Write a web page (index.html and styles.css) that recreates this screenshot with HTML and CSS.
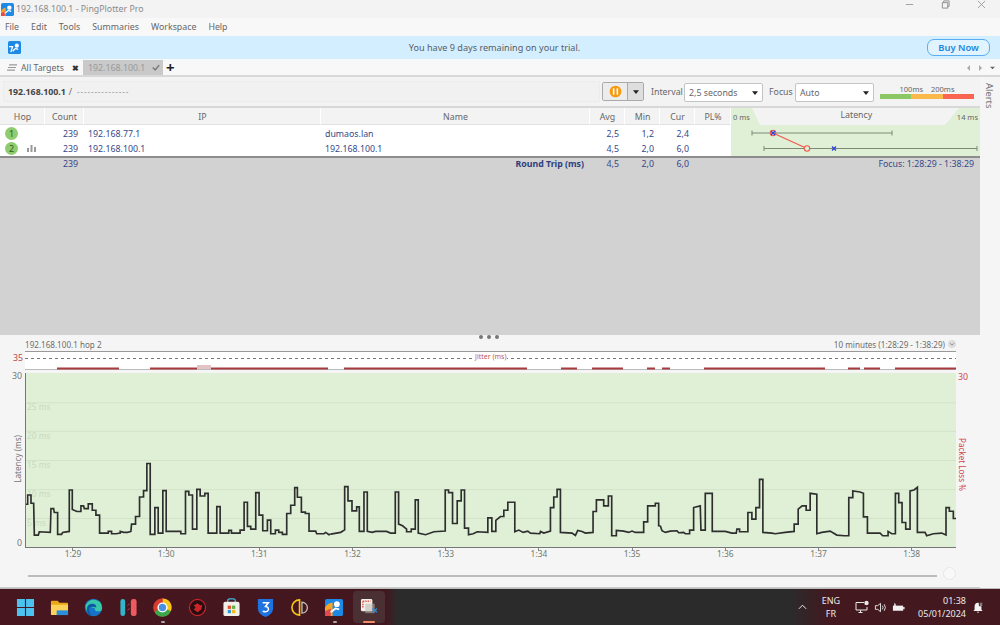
FILE: index.html
```html
<!DOCTYPE html>
<html lang="en">
<head>
<meta charset="utf-8">
<title>PingPlotter Pro</title>
<link rel="stylesheet" href="styles.css">
</head>
<body>
<div class="app">
  <header class="titlebar">
    <svg class="app-icon" viewBox="0 0 14 14"><rect width="14" height="14" rx="2" fill="#1e88e5"/><path d="M0 9 Q2 5 5 5 L5 14 L0 14Z" fill="#f4a62a"/><path d="M0 11 L4 9 L4 14 L0 14Z" fill="#e5484d"/><circle cx="9" cy="5" r="2.4" fill="#fff"/><path d="M4 11 L8 8 L11 9" stroke="#fff" stroke-width="1.4" fill="none"/></svg>
    <span class="title-text">192.168.100.1 - PingPlotter Pro</span>
    <div class="win-controls">
      <svg viewBox="0 0 10 10"><path d="M1 5H9" stroke="#999" stroke-width="1"/></svg>
      <svg viewBox="0 0 10 10"><path d="M1.5 3H7.5V9H1.5ZM3 3V1H9V7H7.5" stroke="#888" fill="none"/></svg>
      <svg viewBox="0 0 10 10"><path d="M1 1L9 9M9 1L1 9" stroke="#999" stroke-width="1"/></svg>
    </div>
  </header>
  <nav class="menubar"><span>File</span><span>Edit</span><span>Tools</span><span>Summaries</span><span>Workspace</span><span>Help</span></nav>
  <div class="banner">
    <svg class="banner-icon" viewBox="0 0 14 14"><rect width="14" height="14" rx="2" fill="#1e88e5"/><circle cx="9.5" cy="5" r="2.2" fill="#fff"/><path d="M1 6H5L3 12M5 11L8 8L11 9" stroke="#fff" stroke-width="1.4" fill="none"/></svg>
    <span class="banner-text">You have 9 days remaining on your trial.</span>
    <button class="buy">Buy Now</button>
  </div>
  <div class="tabs">
    <div class="tab tab-all">
      <svg class="tab-list" viewBox="0 0 10 7"><path d="M2 .8H10M1 3.5H9M0 6.2H8" stroke="#999" stroke-width="1.2"/></svg>
      <span>All Targets</span><b class="tab-x">✖</b>
    </div>
    <div class="tab tab-target"><span>192.168.100.1</span><svg class="tab-check" viewBox="0 0 10 8"><path d="M1 4L4 7L9 1" stroke="#777" stroke-width="1.8" fill="none"/></svg></div>
    <span class="tab-plus">+</span>
    <div class="tab-nav">
      <svg viewBox="0 0 6 8"><path d="M5 0V8L1 4Z" fill="#aaa"/></svg>
      <svg viewBox="0 0 6 8"><path d="M1 0V8L5 4Z" fill="#aaa"/></svg>
      <svg viewBox="0 0 8 6"><path d="M0 1H8L4 5Z" fill="#666"/></svg>
    </div>
  </div>
  <div class="main">
    <div class="content">
      <div class="toolbar">
        <div class="crumb"><b>192.168.100.1</b> <span>/</span> <span class="dashes">---------------</span></div>
        <div class="pause-group">
          <span class="pause-btn"><svg viewBox="0 0 14 14"><circle cx="7" cy="7" r="6.3" fill="#f79a0e"/><path d="M5 3.6V10.4M9 3.6V10.4" stroke="#fff" stroke-width="1.7"/></svg></span>
          <span class="pause-drop"><svg viewBox="0 0 8 5"><path d="M0 0H8L4 5Z" fill="#222"/></svg></span>
        </div>
        <label class="field-label label-interval">Interval</label>
        <div class="select select-interval"><span>2,5 seconds</span><svg viewBox="0 0 8 5"><path d="M0 0H8L4 5Z" fill="#222"/></svg></div>
        <label class="field-label label-focus">Focus</label>
        <div class="select select-focus"><span>Auto</span><svg viewBox="0 0 8 5"><path d="M0 0H8L4 5Z" fill="#222"/></svg></div>
        <div class="legend">
          <div class="legend-labels"><span>100ms</span><span>200ms</span></div>
          <div class="legend-bar"><i class="lg-green"></i><i class="lg-orange"></i><i class="lg-red"></i></div>
        </div>
      </div>
      <div class="table">
        <div class="th">Hop</div><div class="th">Count</div><div class="th">IP</div><div class="th">Name</div><div class="th">Avg</div><div class="th">Min</div><div class="th">Cur</div><div class="th">PL%</div>
        <div class="th-latency"><span>0 ms</span><span class="lat-title">Latency</span><span>14 ms</span></div>

        <div class="td hop"><span class="hop-dot">1</span></div><div class="td num">239</div><div class="td">192.168.77.1</div><div class="td">dumaos.lan</div><div class="td num">2,5</div><div class="td num">1,2</div><div class="td num">2,4</div><div class="td"></div>
        <div class="lat-cell">
          <svg viewBox="0 0 249 32" width="249" height="32">
            <path d="M21 8H161M21 5.5V10.5M161 5.5V10.5M33 23.5H246M33 21V26M246 21V26" stroke="#7d8a78" stroke-width="1" fill="none"/>
            <path d="M42 8L76 23.5" stroke="#f2584c" stroke-width="1.2"/>
            <circle cx="42" cy="8" r="2.7" fill="none" stroke="#f2584c" stroke-width="1.1"/>
            <circle cx="76" cy="23.5" r="2.7" fill="#dff0d8" stroke="#f2584c" stroke-width="1.1"/>
            <path d="M40 6L44 10M44 6L40 10M101 21.5L105 25.5M105 21.5L101 25.5" stroke="#2b3fe0" stroke-width="1.2"/>
          </svg>
        </div>
        <div class="td hop"><span class="hop-dot">2</span><svg class="hop-bars" viewBox="0 0 9 7"><path d="M0 3H2V7H0ZM3.5 0H5.5V7H3.5ZM7 2H9V7H7Z" fill="#999"/></svg></div><div class="td num">239</div><div class="td">192.168.100.1</div><div class="td">192.168.100.1</div><div class="td num">4,5</div><div class="td num">2,0</div><div class="td num">6,0</div><div class="td"></div>

        <div class="ts"></div><div class="ts num">239</div><div class="ts"></div><div class="ts rt">Round Trip (ms)</div><div class="ts num">4,5</div><div class="ts num">2,0</div><div class="ts num">6,0</div><div class="ts"></div><div class="ts focus">Focus: 1:28:29 - 1:38:29</div>
      </div>
      <div class="gray-pane"></div>
      <section class="graph">
        <div class="graph-head">
          <span>192.168.100.1 hop 2</span>
          <span class="grip"><i></i><i></i><i></i></span>
          <span class="range">10 minutes (1:28:29 - 1:38:29) <svg viewBox="0 0 10 10"><circle cx="5" cy="5" r="5" fill="#ddd"/><path d="M2.5 4L5 6.5L7.5 4" stroke="#777" fill="none"/></svg></span>
        </div>
        <div class="jitter-row">
          <span class="jitter-num">35</span>
          <div class="jitter">
            <span class="jitter-label">Jitter (ms)</span>
            <svg viewBox="25 0 931 18" preserveAspectRatio="none">
              <path d="M25 6.5H956" stroke="#777" stroke-width="1" stroke-dasharray="3 3"/>
              <path d="M25 17.5H956" stroke="#bbb" stroke-width="1"/>
              <rect x="197" y="13" width="14" height="4" fill="#e3c4c4"/>
              <path d="M57 16.5H119M150 16.5H197M211 16.5H328M344 16.5H527M561 16.5H577M592 16.5H623M647 16.5H655M662 16.5H670M704 16.5H825M848 16.5H860M864 16.5H880M895 16.5H956" stroke="#a83a3e" stroke-width="2"/>
            </svg>
          </div>
        </div>
        <div class="plot-row">
          <div class="y-left"><span>30</span><span class="y-title">Latency (ms)</span><span>0</span></div>
          <div class="plot">
            <svg viewBox="75 129 2793 525" preserveAspectRatio="none">
              <path d="M75 219H2868M75 305H2868M75 393H2868M75 481H2868M75 568H2868" stroke="#d2e3c8" stroke-width="3"/>
              <g class="plot-grid-labels">
                <text x="78" y="241">25 ms</text><text x="78" y="328">20 ms</text><text x="78" y="416">15 ms</text><text x="78" y="504">10 ms</text><text x="78" y="590">5 ms</text>
              </g>
              <g class="trace">
                <polyline points="75,525 80,525 80,497 90,497 90,522 98,522 100,618 112,618 115,608 148,610 150,538 158,538 160,550 170,550 170,616 182,616 185,610 205,607 205,482 214,482 214,541 228,547 240,547 240,530 248,530 250,538 262,538 262,524 274,524 274,543 285,543 285,558 296,558 296,612 322,612 322,607 332,607 332,614 345,614 358,612 358,607 368,610 380,610 390,607 392,585 404,585 404,562 416,562 416,503 428,503 428,484 438,484 438,402 448,402 448,616 462,616 462,535 472,535 472,612 486,612 486,484 496,484 496,607 540,607 540,614 554,614 554,486 564,486 564,497 575,497 575,600 588,600 588,480 598,480 598,500 612,500 612,492 622,492 622,612 648,612 648,532 658,532 658,612 684,612 684,604 692,604 692,612 718,612 718,603 730,603 730,519 740,519 740,592 750,592 750,600 765,600 765,490 775,490 775,558 786,558 786,605 800,605 800,573 810,573 810,614 824,614 824,603 834,603 834,610 845,610 845,616 858,616 858,553 870,553 870,528 882,528 882,475 890,475 890,504 902,504 902,549 914,549 914,553 925,553 925,606 945,606 948,614 970,614 975,610 985,617 990,615"/>
                <polyline transform="translate(990 0)" points="0,615 30,610 42,602 42,472 52,472 52,515 64,515 64,545 78,545 78,533 86,533 86,607 100,607 100,488 110,488 110,607 125,610 135,607 168,607 180,612 194,612 194,488 204,488 204,585 216,590 228,600 228,608 242,608 242,600 254,600 254,512 263,512 263,612 285,617 310,608 344,606 344,482 354,482 354,490 366,490 366,583 380,583 380,515 392,515 392,482 402,482 402,597 414,597 414,617 428,614 440,608 472,610 472,566 484,566 484,607 496,607 496,574 510,562 520,562 520,543 532,543 532,519 553,519 553,608 565,603 578,610 592,606 600,612 628,614 630,607 640,612 660,606 660,535 670,535 670,503 680,503 680,480 690,480 690,610 725,612 735,619 742,604 755,607 765,612 788,610 788,547 798,547 798,512 820,512 820,530 834,530 834,500 844,500 844,620 858,620 858,604 880,606 895,610 905,606 915,610 940,610 940,578 952,578 952,530 975,530 975,522 985,522 985,590 990,590"/>
                <polyline transform="translate(1980 0)" points="0,590 5,605 15,610 30,606 50,605 55,611 70,610 75,614 88,614 88,603 100,603 100,535 120,530 122,603 135,603 135,492 156,492 156,607 195,607 215,612 228,612 230,600 238,600 238,608 263,608 263,550 275,550 275,570 287,570 287,535 298,535 298,450 308,450 308,610 335,612 345,614 375,610 402,607 402,585 414,585 414,540 426,530 438,530 438,543 450,543 450,492 470,495 470,614 485,610 510,606 530,618 553,620 566,620 566,505 578,505 578,485 600,488 610,492 610,563 622,563 622,612 660,612 668,620 684,620 684,607 695,614 706,614 706,492 716,492 716,520 726,520 726,580 737,580 737,600 750,600 750,485 762,482 772,474 772,610 795,610 800,620 820,614 845,612 858,618 858,535 868,535 868,546 880,546 880,568 890,568"/>
              </g>
            </svg>
          </div>
          <div class="y-right"><span class="y-right-num">30</span><span class="y-right-title">Packet Loss %</span></div>
        </div>
        <div class="x-axis"><span>1:29</span><span>1:30</span><span>1:31</span><span>1:32</span><span>1:33</span><span>1:34</span><span>1:35</span><span>1:36</span><span>1:37</span><span>1:38</span></div>
        <div class="slider"><div class="slider-track"></div><div class="slider-thumb"></div></div>
      </section>
    </div>
    <aside class="alerts"><span>Alerts</span></aside>
  </div>
  <footer class="taskbar">
    <div class="task-icons">
      <span class="ti"><svg viewBox="0 0 20 20"><path d="M1 1H9.4V9.4H1ZM10.6 1H19V9.4H10.6ZM1 10.6H9.4V19H1ZM10.6 10.6H19V19H10.6Z" fill="#4cc2f1"/></svg></span>
      <span class="ti"><svg viewBox="0 0 20 20"><path d="M1 4Q1 3 2 3H8L10 5H18Q19 5 19 6V8H1Z" fill="#e9a719"/><path d="M1 7H19V17Q19 18 18 18H2Q1 18 1 17Z" fill="#fbd35a"/><rect x="7" y="13" width="12" height="5" fill="#2a8fd8"/></svg></span>
      <span class="ti"><svg viewBox="0 0 20 20"><circle cx="10" cy="10" r="9.2" fill="#1773c7"/><path d="M1.5 8Q5 1 12 2Q19 3 19 11Q19 14 15 14Q11 14 11.500 11Q8 9 6 11Q5 14 8 18Q2 16 1.500 8Z" fill="#38c6a8"/><path d="M3 12Q3 6 9 6Q13 6 13 10Q8 8 6 11Q5 15 9 18.500Q3 18 3 12Z" fill="#0c5aa6"/></svg></span>
      <span class="ti"><svg viewBox="0 0 20 20"><rect x="1.500" y="1" width="5" height="18" rx="2.500" fill="#34b4c8"/><rect x="12.500" y="1" width="6" height="18" rx="2.500" fill="#ee5a5f"/><path d="M9 8L11 6M9 13L11 11" stroke="#c04a50"/></svg></span>
      <span class="ti"><svg viewBox="0 0 20 20"><circle cx="10" cy="10" r="9.500" fill="#d93b2f"/><path d="M10 .5A9.500 9.500 0 0 1 18.700 14L10 10Z" fill="#f5c518"/><path d="M1.500 14.500A9.500 9.500 0 0 1 10 .5L10 10Z" fill="#d93b2f"/><path d="M1.500 14.500L10 10L18.700 14A9.500 9.500 0 0 1 1.500 14.500Z" fill="#3ca648"/><circle cx="10" cy="10" r="4.600" fill="#4a90e2" stroke="#fff" stroke-width="1.500"/></svg><i class="run-dot"></i></span>
      <span class="ti"><svg viewBox="0 0 20 20"><circle cx="10" cy="10" r="8.500" fill="#2a0d10" stroke="#c9252b" stroke-width="1.200"/><path d="M6 8L10 5.500L13 8L15 7L14 12L10 15L6 12L8 10Z" fill="#c9252b"/></svg></span>
      <span class="ti"><svg viewBox="0 0 20 20"><path d="M6 5V3Q6 1 8 1H12Q14 1 14 3V5" stroke="#3fb6d8" stroke-width="1.400" fill="none"/><rect x="1.500" y="4" width="17" height="15" rx="2" fill="#f2efe9"/><path d="M6 8H9.500V11.500H6Z" fill="#e8502f"/><path d="M10.500 8H14V11.500H10.500Z" fill="#5fb244"/><path d="M6 12.500H9.500V16H6Z" fill="#2a9ad8"/><path d="M10.500 12.500H14V16H10.500Z" fill="#f5b817"/></svg></span>
      <span class="ti"><svg viewBox="0 0 20 20"><path d="M2 1H18V11Q18 17 10 20Q2 17 2 11Z" fill="#1e73e0"/><path d="M7 5H13L10 9Q13.500 9.500 13 12.500Q12 15.500 7 14" stroke="#fff" stroke-width="1.600" fill="none"/></svg></span>
      <span class="ti"><svg viewBox="0 0 20 20"><path d="M9 2A8 8 0 0 0 9 18Z" fill="none" stroke="#f5c518" stroke-width="1.700"/><path d="M11.500 4.500A5.700 5.700 0 0 1 11.500 16Z" fill="none" stroke="#bdbdbd" stroke-width="1.400"/></svg></span>
      <span class="ti"><svg viewBox="0 0 20 20"><rect y="1" width="19" height="18" rx="2" fill="#1e88e5"/><path d="M0 10Q3 5 8 5V19H1Q0 19 0 18Z" fill="#f4a62a"/><path d="M0 14L6 11V19H1Q0 19 0 18Z" fill="#e5484d"/><circle cx="12.500" cy="6.500" r="3" fill="#fff"/><path d="M6 15L11 11L15 12" stroke="#fff" stroke-width="2" fill="none"/></svg><i class="run-dot"></i></span>
      <span class="ti ti-active"><svg viewBox="0 0 20 20"><rect x="1" y="1" width="12" height="13" rx="1.500" fill="#f2efe9"/><path d="M3 3.500H11M3 3.500V11" stroke="#e0584a" stroke-width="1.500" stroke-dasharray="1.500 1"/><rect x="5.500" y="6" width="10" height="10" fill="#b9b5ae" opacity=".55"/><path d="M13 15L18 11M13 11L18 15" stroke="#2f8fd6" stroke-width="1.200"/></svg><i class="run-bar"></i></span>
    </div>
    <div class="tray">
      <svg class="tray-chevron" viewBox="0 0 10 6"><path d="M1 5L5 1L9 5" stroke="#eee" stroke-width="1.100" fill="none"/></svg>
      <div class="lang"><span>ENG</span><span>FR</span></div>
      <svg class="tray-i tray-mon" viewBox="0 0 14 14"><path d="M1 2.500H9M1 2.500V10H12V7M3.500 12.500H7.500M5.500 10V12.500" stroke="#e8e8e8" fill="none"/><circle cx="11.500" cy="3" r="2.200" fill="#e8e8e8"/></svg>
      <svg class="tray-i" viewBox="0 0 14 14"><path d="M1.500 5H4L7 2.500V11.500L4 9H1.500Z" stroke="#e8e8e8" fill="none"/><path d="M9 5Q10.500 7 9 9M11 3.500Q13.500 7 11 10.500" stroke="#e8e8e8" fill="none"/></svg>
      <svg class="tray-i" viewBox="0 0 14 14"><path d="M1 5H12V10.500H1Z" fill="#f0f0f0"/><path d="M12 6.500H13.500V9H12Z" fill="#f0f0f0"/><path d="M3 1.500L2 5H4.500Z" fill="#f0f0f0"/></svg>
      <div class="clock"><span>01:38</span><span>05/01/2024</span></div>
      <svg class="tray-bell" viewBox="0 0 14 14"><path d="M7 1.500Q3 1.500 3 6V9.500L1.500 11H12.500L11 9.500V6Q11 1.500 7 1.500ZM5.500 12Q7 14 8.500 12" fill="#f4f4f4"/><rect x="8" y="1" width="5" height="4.500" rx="1" fill="#3a1a20"/><path d="M9 2H12M9 3.300H12M9 4.600H12" stroke="#f4f4f4" stroke-width=".6"/></svg>
    </div>
  </footer>
</div>
</body>
</html>
```

FILE: styles.css
```css
* { box-sizing: border-box; }
html, body { margin: 0; padding: 0; }
body { font-family: "Noto Sans", "Open Sans", sans-serif; font-size: 8.8px; color: #666; background: #f3f3f3; }
svg { display: block; }

.app { width: 1000px; height: 625px; display: flex; flex-direction: column; overflow: hidden; background: #f5f5f5; }

.titlebar { height: 18px; flex: none; display: flex; align-items: center; padding-left: 1px; background: #f3f3f3; }
.app-icon { width: 13px; height: 13px; margin-right: 2px; }
.title-text { font-size: 8.8px; color: #8a8a8a; }
.win-controls { margin-left: auto; display: flex; gap: 27px; padding-right: 14px; margin-top: -9px; }
.win-controls svg { width: 9px; height: 9px; }

.menubar { height: 18px; flex: none; display: flex; align-items: center; gap: 12px; padding-left: 5px; font-size: 8.8px; color: #666; background: #f8f8f8; }

.banner { height: 23px; flex: none; display: flex; align-items: center; justify-content: center; position: relative; background: #d3eeff; }
.banner-icon { position: absolute; left: 8px; top: 5px; width: 13px; height: 13px; }
.banner-text { font-size: 9.1px; color: #555e66; margin-left: -11px; }
.buy { position: absolute; left: 927px; top: 3px; width: 63px; height: 17px; padding: 0; border: 1px solid #58aef0; border-radius: 7px; background: #e0f3ff; color: #1d86de; font: 600 9.4px "Noto Sans", sans-serif; }

.tabs { height: 16px; flex: none; display: flex; align-items: stretch; background: #f8f8f8; border-top: 1px solid #f8f8f8; }
.tab { display: flex; align-items: center; font-size: 8.8px; }
.tab-all { width: 83px; padding-left: 7px; color: #666; }
.tab-list { width: 10px; height: 7px; margin-right: 4px; }
.tab-x { margin-left: 8px; font-size: 8px; color: #333; }
.tab-target { width: 80px; padding-left: 5px; background: #c9c9c9; color: #9a9a9a; }
.tab-check { width: 8px; height: 7px; margin-left: 7px; }
.tab-plus { margin-left: 3px; font-size: 15px; font-weight: 700; line-height: 15px; color: #222; }
.tab-nav { margin-left: auto; display: flex; gap: 7px; align-items: center; padding-right: 5px; }
.tab-nav svg { width: 5px; height: 6px; }

.main { flex: 1; min-height: 0; display: flex; border-top: 2px solid #d8d8d8; }
.content { width: 980px; flex: none; display: flex; flex-direction: column; }
.alerts { flex: 1; padding-top: 6px; background: #f5f5f5; }
.alerts span { display: block; writing-mode: vertical-rl; font-size: 9.4px; color: #777; margin-left: 3px; }

.toolbar { height: 31px; flex: none; display: flex; align-items: center; padding: 4px 0 4px 3px; background: #f3f3f3; border-bottom: 2px solid #d8d8d8; }
.crumb { width: 597px; height: 21px; display: flex; align-items: center; gap: 3px; padding-left: 4px; border: 1px solid #ececec; font-size: 8.8px; color: #666; background: #f1f1f1; }
.crumb b { color: #444; font-weight: 700; }
.dashes { color: #999; margin-left: 2px; font-size: 8px; letter-spacing: .9px; }
.pause-group { display: flex; height: 19px; margin-left: 2px; border: 1px solid #aaa; border-radius: 2px; }
.pause-btn { width: 24px; display: flex; align-items: center; justify-content: center; background: #ececec; }
.pause-btn svg { width: 13px; height: 13px; }
.pause-drop { width: 16px; display: flex; align-items: center; justify-content: center; background: #dedede; border-left: 1px solid #aaa; }
.pause-drop svg { width: 6px; height: 4px; }
.field-label { font-size: 8.8px; color: #666; }
.label-interval { width: 33px; margin-left: 7px; }
.label-focus { width: 26px; margin-left: 6px; }
.select { height: 19px; display: flex; align-items: center; justify-content: space-between; padding: 0 4px; margin-top: 2px; background: #fff; border: 1px solid #c4c4c4; border-radius: 2px; font-size: 8.8px; color: #666; }
.select svg { width: 6px; height: 4px; }
.select-interval { width: 79px; }
.select-focus { width: 79px; }
.legend { width: 94px; margin-left: 6px; display: flex; flex-direction: column; }
.legend-labels { display: flex; gap: 8px; justify-content: center; padding-left: 0; font-size: 7.5px; line-height: 8px; color: #666; }
.legend-bar { display: flex; height: 5px; margin-top: 1px; }
.legend-bar i { flex: 1; }
.lg-green { background: #8cc766; }
.lg-orange { background: #fcb94b; }
.lg-red { background: #f96552; }

.table { flex: none; display: grid; grid-template-columns: 45px 39px 237px 269px 35px 35px 35px 36px 249px; grid-template-rows: 17px 16px 15px 16px; font-size: 8.8px; color: #36488a; }
.th { display: flex; align-items: center; justify-content: center; padding: 1px 0 0 1px; background: #f3f3f3; border-right: 1px solid #fff; border-bottom: 1px solid #e2e2e2; color: #666; }
.th-latency { position: relative; display: flex; justify-content: space-between; align-items: center; padding: 0 2px; background: #dff0d6; color: #666; font-size: 7.5px; }
.th-latency::before { content: ""; position: absolute; inset: 0; background: #f3f3f3; clip-path: polygon(21px 0, 228px 0, 214px 100%, 29px 100%); }
.th-latency span { position: relative; }
.lat-title { font-size: 8.8px; margin-top: -4px; margin-left: 6px; }
.td { display: flex; align-items: center; padding: 1px 0 0 4px; background: #fff; min-width: 0; }
.td.num, .ts.num { justify-content: flex-end; padding-left: 0; padding-right: 6px; }
.td.hop { padding: 0 0 0 5px; gap: 9px; }
.hop-dot { width: 13px; height: 13px; border-radius: 50%; display: flex; align-items: center; justify-content: center; background: #8fcb6f; color: #2f5d22; font-size: 9px; }
.hop-bars { width: 9px; height: 7px; }
.lat-cell { grid-column: 9; grid-row: 2 / span 2; background: #dff0d6; }
.ts { display: flex; align-items: center; padding-bottom: 3px; background: #d2d2d2; border-top: 2px solid #8d8d8d; min-width: 0; }
.rt { justify-content: flex-end; padding-right: 6px; font-weight: 700; color: #2d3f7f; }
.focus { justify-content: flex-end; padding-right: 6px; }

.gray-pane { flex: 1; min-height: 0; background: #d2d2d2; }

.graph { height: 253px; flex: none; display: flex; flex-direction: column; background: #f5f5f5; }
.graph-head { height: 16px; flex: none; position: relative; display: flex; align-items: center; justify-content: space-between; padding: 2px 24px 0 25px; font-size: 8.1px; color: #6d6d6d; }
.range { display: flex; align-items: center; gap: 3px; }
.range svg { width: 8px; height: 8px; }
.grip { position: absolute; left: 479px; top: 0; display: flex; gap: 4px; }
.grip i { width: 4px; height: 4px; border-radius: 50%; background: #777; }
.jitter-row { height: 19px; margin-bottom: 3px; flex: none; display: flex; }
.jitter-num { width: 25px; padding: 1px 2px 0 0; text-align: right; font-size: 8.8px; line-height: 13px; color: #c0474a; }
.jitter { width: 931px; position: relative; background: #fff; border-top: 1px solid #999; }
.jitter svg { width: 931px; height: 18px; }
.jitter-label { position: absolute; left: 450px; top: 0; font-size: 7px; color: #c0575a; background: #fff; }
.plot-row { height: 175px; flex: none; display: flex; }
.y-left { width: 25px; flex: none; position: relative; display: flex; flex-direction: column; justify-content: space-between; align-items: flex-end; padding: 0 3px 0 0; font-size: 8.8px; color: #777; line-height: 12px; margin-top: -3px; height: 179px; }
.y-title { position: absolute; left: 13px; top: 65px; writing-mode: vertical-rl; transform: rotate(180deg); font-size: 8.1px; line-height: 9px; color: #777; }
.plot { width: 931px; flex: none; background: #dff0d6; border-left: 1px solid #777; border-bottom: 1px solid #777; }
.plot svg { width: 100%; height: 100%; }
.plot-grid-labels text { font-size: 25px; fill: #c8dabf; font-family: "Noto Sans", sans-serif; }
.trace polyline { fill: none; stroke: #2e2e2e; stroke-width: 5; stroke-linejoin: miter; }
.y-right { flex: 1; position: relative; color: #d0474b; }
.y-right-num { position: absolute; left: 2px; top: -2px; font-size: 8.8px; }
.y-right-title { position: absolute; left: 1px; top: 65px; writing-mode: vertical-rl; font-size: 8.1px; line-height: 11px; }
.x-axis { height: 16px; flex: none; display: flex; padding-left: 26.4px; font-size: 8.4px; color: #6e7a6e; }
.x-axis span { flex: 0 0 93.2px; text-align: center; line-height: 12px; position: relative; }
.x-axis span::before { content: ""; position: absolute; left: 46px; top: 0; width: 1px; height: 3px; background: #888; }
.slider { flex: 1; position: relative; display: flex; align-items: center; padding: 0 43px 0 28px; border-bottom: 1px solid #ccc; }
.slider-track { width: 100%; height: 2px; background: #bcbcbc; }
.slider-thumb { position: absolute; left: 943px; top: 3px; width: 13px; height: 13px; border-radius: 50%; background: #f8f8f8; border: 1px solid #e8e8e8; }

.taskbar { height: 37px; flex: none; display: flex; align-items: center; background: linear-gradient(90deg, #48161f 0, #43171f 385px, #2b2b2b 398px, #2b2b2b 790px, #43181f 830px, #43181f 100%); color: #eaeaea; border-top: 1px solid #bbb; }
.task-icons { display: flex; gap: 2px; padding-left: 9px; }
.ti { width: 32.4px; height: 32px; display: flex; align-items: center; justify-content: center; position: relative; }
.ti svg { width: 19px; height: 19px; }
.ti-active { background: #4a2f33; border-radius: 4px; }
.run-dot { position: absolute; left: 14px; bottom: 0; width: 4px; height: 2px; background: #aaa; border-radius: 1px; }
.run-bar { position: absolute; left: 10px; bottom: 0; width: 12px; height: 2px; background: #f08a68; border-radius: 1px; }
.tray { margin-left: auto; display: flex; align-items: center; padding-right: 16px; font-size: 9px; }
.tray-chevron { width: 9px; height: 6px; margin-right: 15px; }
.lang { display: flex; flex-direction: column; align-items: center; line-height: 13px; margin-right: 15px; }
.tray-i { width: 13px; height: 13px; margin-right: 5px; }
.tray-mon { width: 14px; height: 14px; }
.clock { display: flex; flex-direction: column; align-items: flex-end; line-height: 13px; margin-left: 8px; margin-right: 6px; }
.tray-bell { width: 12px; height: 13px; }
```
